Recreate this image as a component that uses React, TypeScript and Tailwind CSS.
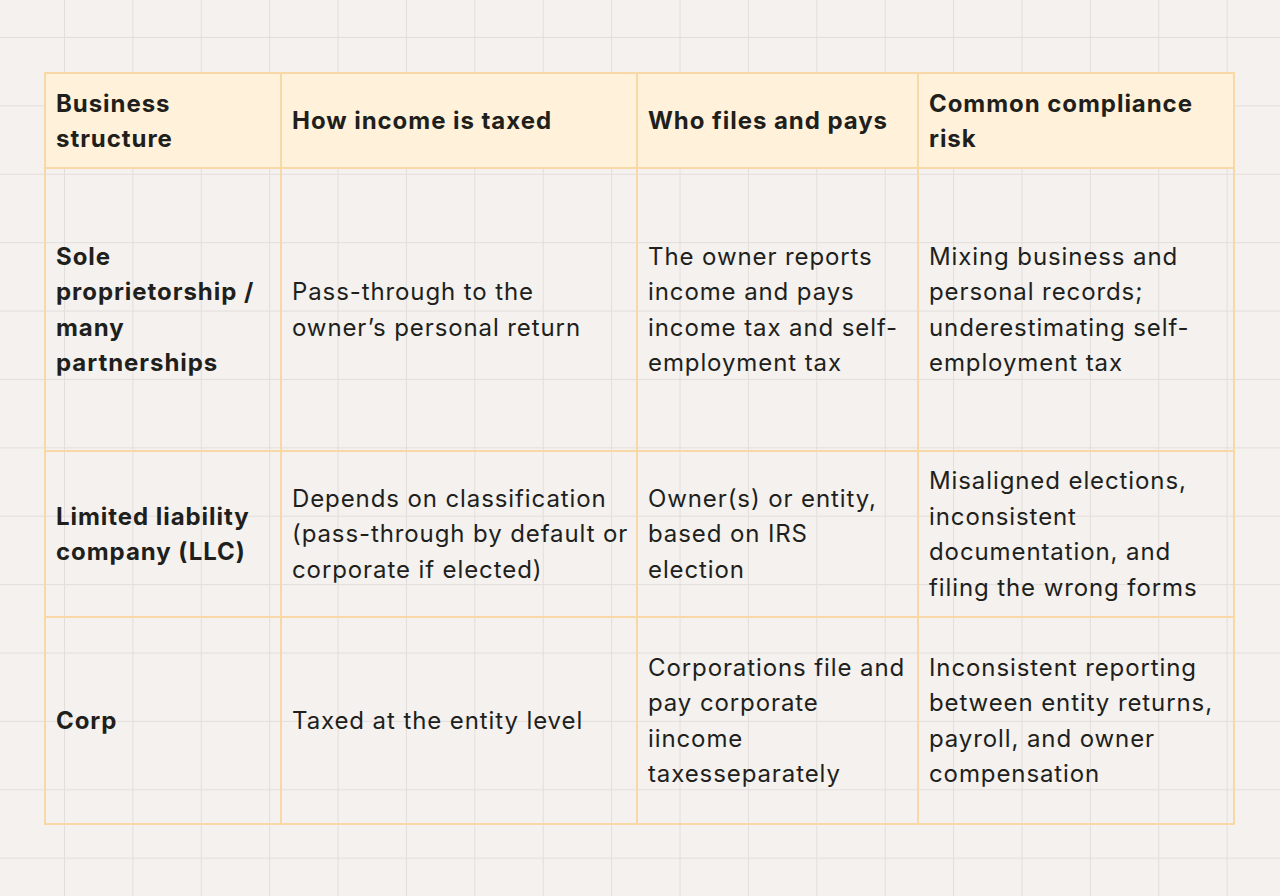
import React from 'react';

type Row = {
  height: string;
  cells: string[][];
};

// Lignes découpées comme dans la maquette
const headers: string[][] = [
  ['Business', 'structure'],
  ['How income is taxed'],
  ['Who files and pays'],
  ['Common compliance', 'risk'],
];

const rows: Row[] = [
  {
    height: 'h-[283px]',
    cells: [
      ['Sole', 'proprietorship /', 'many', 'partnerships'],
      ['Pass-through to the', 'owner\u2019s personal return'],
      ['The owner reports', 'income and pays', 'income tax and self-', 'employment tax'],
      ['Mixing business and', 'personal records;', 'underestimating self-', 'employment tax'],
    ],
  },
  {
    height: 'h-[166px]',
    cells: [
      ['Limited liability', 'company (LLC)'],
      ['Depends on classification', '(pass-through by default or', 'corporate if elected)'],
      ['Owner(s) or entity,', 'based on IRS', 'election'],
      ['Misaligned elections,', 'inconsistent', 'documentation, and', 'filing the wrong forms'],
    ],
  },
  {
    height: 'h-[207px]',
    cells: [
      ['Corp'],
      ['Taxed at the entity level'],
      ['Corporations file and', 'pay corporate', 'iincome', 'taxesseparately'],
      ['Inconsistent reporting', 'between entity returns,', 'payroll, and owner', 'compensation'],
    ],
  },
];

const Lines: React.FC<{ lines: string[] }> = ({ lines }) => (
  <div>
    {lines.map((l, i) => (
      <div key={i} className="whitespace-nowrap">
        {l}
      </div>
    ))}
  </div>
);

const App: React.FC = () => {
  return (
    <div className="w-[1280px] h-[896px] overflow-hidden bg-[#f4f1ef] bg-[linear-gradient(to_right,#e3dedb_1px,transparent_1px),linear-gradient(to_bottom,#e3dedb_1px,transparent_1px)] bg-[size:68.4px_68.4px] bg-[position:-4.4px_-31.4px] pt-[72px] pl-[44px] font-['Inter','Noto_Sans',sans-serif] text-[#211f1c]">
      {/* Tableau */}
      <div className="grid grid-cols-[236px_356px_281px_316px] w-fit border-l-2 border-t-2 border-[#f7d8a6]">
        {headers.map((h, i) => (
          <div
            key={i}
            className="h-[95px] flex items-center px-[10px] bg-[#fff1da] border-r-2 border-b-2 border-[#f7d8a6] text-[24px] leading-[35px] font-bold tracking-[0.95px]"
          >
            <Lines lines={h} />
          </div>
        ))}
        {rows.map((row, ri) =>
          row.cells.map((c, ci) => (
            <div
              key={`${ri}-${ci}`}
              className={`${row.height} flex items-center px-[10px] border-r-2 border-b-2 border-[#f7d8a6] text-[24px] leading-[35.5px] ${ci === 0 ? 'font-bold tracking-[0.95px]' : 'font-normal tracking-[0.9px]'}`}
            >
              <Lines lines={c} />
            </div>
          ))
        )}
      </div>
    </div>
  );
};

export default App;
